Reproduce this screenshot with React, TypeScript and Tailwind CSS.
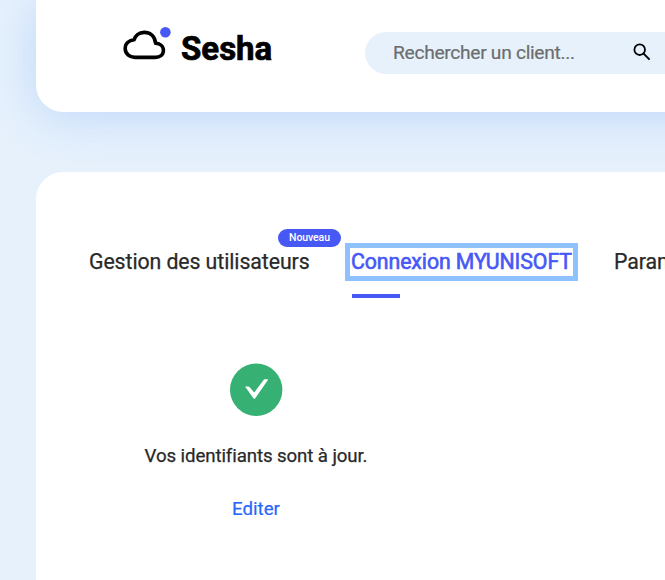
import { FC } from 'react';

const CloudLogo: FC = () => (
  <svg className="w-[50px] h-[36px] shrink-0" viewBox="0 0 50 36" fill="none">
    <path
      d="M32.6 16.3C31.9 9.2 27 5.4 21.2 5.4c-5.5 0-9 3.6-10.1 7.4-4.8.5-8.9 3.4-8.9 8.8 0 5.2 4.3 8.8 9.5 8.8h20.6c4.4 0 8.1-2.2 8.1-7.1 0-4.7-4.2-6.9-7.8-7z"
      stroke="#000"
      strokeWidth="3.6"
      strokeLinejoin="round"
    />
    <circle cx="42.4" cy="5.3" r="5.3" fill="#4758f5" />
  </svg>
);

const SearchBar: FC = () => (
  <div className="ml-[92px] mt-[4.5px] flex h-[42px] w-[322px] items-center rounded-full bg-[#e6f1fc] pl-[28px]">
    <span className="w-[240px] pt-px text-[19.2px] tracking-[-0.3px] text-[#6d6d6d] [-webkit-text-stroke:0.2px_#6d6d6d]">
      Rechercher un client...
    </span>
    <svg className="size-[18px] -mt-px" viewBox="0 0 18 18" fill="none" stroke="#000" strokeWidth="1.8">
      <circle cx="6.7" cy="6.7" r="5.3" />
      <path d="M10.6 10.6l6 6" strokeWidth="2" />
    </svg>
  </div>
);

const Header: FC = () => (
  <header className="flex w-[760px] h-[112px] rounded-bl-[27px] bg-white pt-[27px] pl-[87px] shadow-[0_4px_48px_rgba(59,130,246,0.23)]">
    <CloudLogo />
    <span className="ml-[8px] mt-[2px] h-[40px] w-[92px] text-[33px] leading-[40px] font-bold text-black [-webkit-text-stroke:0.7px_#000]">
      Sesha
    </span>
    <SearchBar />
  </header>
);

const Tabs: FC = () => (
  <nav className="flex pt-[71px] pl-[53px] text-[21.3px] leading-[38px] tracking-[-0.09px] whitespace-nowrap text-[#292929] [-webkit-text-stroke:0.25px_#292929]">
    <div className="relative w-[256px]">
      Gestion des utilisateurs
      <span className="absolute left-[189px] top-[-14px] flex h-[18px] w-[63px] items-center justify-center rounded-full bg-[#4758f5] text-[10.5px] font-medium text-white [-webkit-text-stroke:0px]">
        Nouveau
      </span>
    </div>
    <div className="w-[233px]">
      <div className="h-[38px] border-[5px] border-[#8ec1fd] pl-[1px] leading-[28px] text-[#4758f5] [-webkit-text-stroke:0.6px_#4758f5]">
        Connexion MYUNISOFT
      </div>
      <div className="mt-[13px] ml-[6.5px] h-[4px] w-[48.5px] bg-[#4758f5]" />
    </div>
    <div className="ml-[36px]">Paramètres</div>
  </nav>
);

const Status: FC = () => (
  <div className="mt-[65px] ml-[53px] flex w-[334px] flex-col items-center">
    <svg className="size-[53px]" viewBox="0 0 53 53" fill="none">
      <circle cx="26.2" cy="26.8" r="26.2" fill="#36b173" />
      <path d="M15.4 24.1q-.5-.7.3-.7h2.7q.6 0 1 .5l4.8 5.6 9.4-12.6q.4-.6 1-.6h3q.8 0 .3.7L25.1 35.4q-.8.9-1.6 0z" fill="#fff" />
    </svg>
    <p className="mt-[26px] text-[18.7px] leading-[28px] tracking-[-0.11px] text-[#292929] [-webkit-text-stroke:0.25px_#292929]">
      Vos identifiants sont à jour.
    </p>
    <a href="#" className="mt-[25px] text-[18.7px] leading-[28px] text-[#2767fb] [-webkit-text-stroke:0.2px_#2767fb]">
      Editer
    </a>
  </div>
);

export default function App() {
  return (
    <div className="h-[580px] w-[665px] overflow-hidden bg-[#e6f1fc] pl-[36px] font-[Roboto,sans-serif]">
      <Header />
      <main className="relative mt-[60px] h-[430px] w-[760px] rounded-tl-[27px] bg-white">
        <Tabs />
        <Status />
      </main>
    </div>
  );
}
